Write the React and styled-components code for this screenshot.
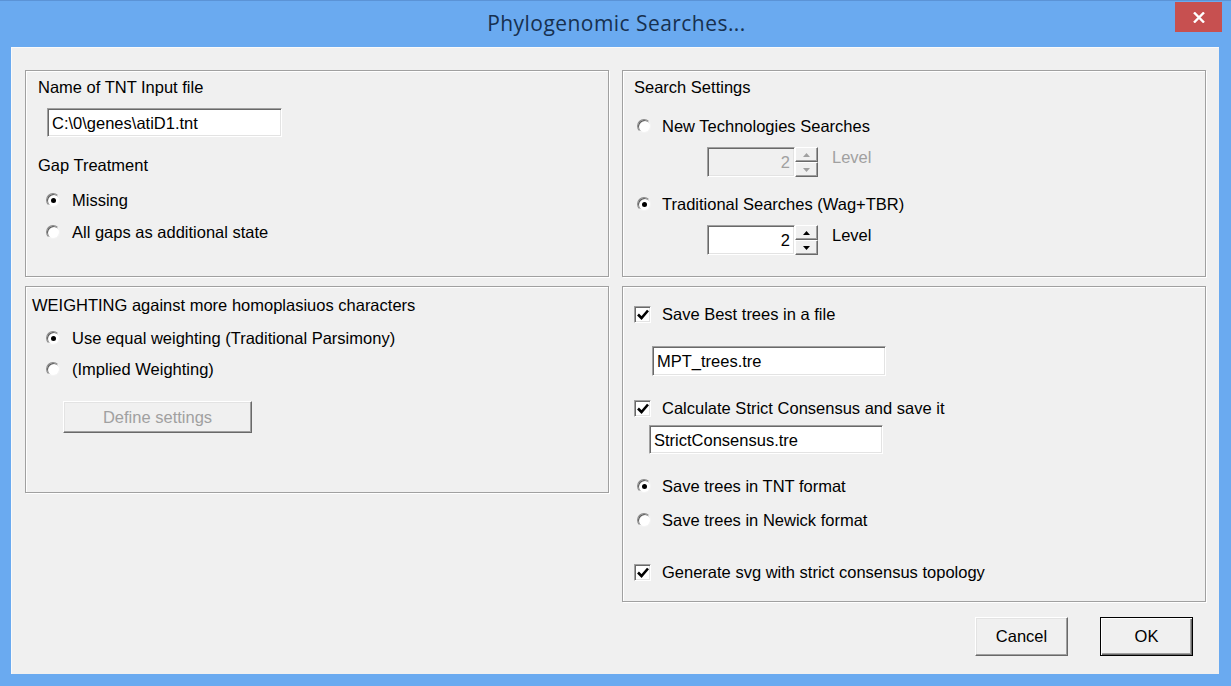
import React from "react";
import styled, { createGlobalStyle } from "styled-components";

const Global = createGlobalStyle`
  html, body { margin: 0; padding: 0; }
  body { width: 1231px; height: 686px; overflow: hidden; font-family: "Liberation Sans", Arial, sans-serif; }
`;

const Window = styled.div`
  width: 1231px;
  height: 686px;
  box-sizing: border-box;
  background: #6aaaf0;
  border-top: 1px solid #5b93d6;
  display: flex;
  flex-direction: column;
  padding: 0 12px 12px 11px;
`;

const TitleBar = styled.div`
  height: 46px;
  display: grid;
  grid-template-columns: 1fr auto 1fr;
  align-items: start;
  margin-right: -3px;
`;

const Title = styled.div`
  grid-column: 2;
  margin-top: 8px;
  font-family: "Open Sans", "Noto Sans", sans-serif;
  font-size: 21px;
  letter-spacing: 0.45px;
  line-height: 28px;
  color: #17304f;
`;

const CloseButton = styled.div`
  grid-column: 3;
  justify-self: end;
  margin-top: 1px;
  width: 47px;
  height: 30px;
  background: #c75050;
  display: flex;
  align-items: center;
  justify-content: center;
`;

const Client = styled.div`
  flex: 1;
  background: #f0f0f0;
  box-shadow: inset 1px 1px 0 #fafafa;
  padding: 23px 14px 0 14px;
  display: flex;
  flex-direction: column;
`;

const Columns = styled.div`
  display: grid;
  grid-template-columns: 584px 584px;
  column-gap: 13px;
  align-items: start;
`;

const Column = styled.div`
  display: flex;
  flex-direction: column;
  gap: 9px;
`;

const GroupBox = styled.div`
  height: ${(p) => p.$h}px;
  box-sizing: border-box;
  border: 1px solid #a0a0a0;
  box-shadow: inset 1px 1px 0 #ffffff, 1px 1px 0 #ffffff;
  display: flex;
  flex-direction: column;
  align-items: flex-start;
`;

const Label = styled.div`
  margin-top: ${(p) => p.$mt}px;
  margin-left: ${(p) => p.$ml}px;
  font-size: 16.5px;
  line-height: 18px;
  color: ${(p) => (p.$disabled ? "#a0a0a0" : "#000")};
  white-space: nowrap;
`;

const TextInput = styled.div`
  margin-top: ${(p) => p.$mt}px;
  margin-left: ${(p) => p.$ml}px;
  width: ${(p) => p.$w}px;
  height: ${(p) => p.$h}px;
  box-sizing: border-box;
  background: #fff;
  border-style: solid;
  border-width: 1px;
  border-color: #a0a0a0 #ffffff #ffffff #a0a0a0;
  box-shadow: inset 1px 1px 0 #696969, inset -1px -1px 0 #e3e3e3;
  font-size: 16.5px;
  line-height: 18px;
  display: flex;
  align-items: center;
  padding-left: 4px;
  white-space: nowrap;
`;

const OptionRow = styled.div`
  margin-top: ${(p) => p.$mt}px;
  margin-left: ${(p) => p.$ml}px;
  height: 20px;
  display: flex;
  align-items: center;
  font-size: 16.5px;
  color: #000;
  white-space: nowrap;
`;

const RadioCircle = styled.span`
  width: 14px;
  height: 14px;
  box-sizing: border-box;
  border-radius: 50%;
  background: radial-gradient(circle at 60% 60%, #ffffff 50%, #dcdcdc 100%);
  border: 1px solid;
  border-color: #8c8c8c #f4f4f4 #f4f4f4 #8c8c8c;
  box-shadow: inset 1px 1px 0 #5a5a5a;
  margin-right: ${(p) => p.$gap}px;
  display: flex;
  align-items: center;
  justify-content: center;
  flex-shrink: 0;
  &::after {
    content: "";
    width: 5px;
    height: 5px;
    border-radius: 50%;
    background: ${(p) => (p.$on ? "#000" : "transparent")};
  }
`;

const CheckBox = styled.span`
  width: 17px;
  height: 17px;
  box-sizing: border-box;
  background: #fff;
  border: 1px solid;
  border-color: #a0a0a0 #ffffff #ffffff #a0a0a0;
  box-shadow: inset 1px 1px 0 #696969, inset -1px -1px 0 #e3e3e3;
  margin-right: 11px;
  display: flex;
  align-items: center;
  justify-content: center;
  flex-shrink: 0;
`;

const SpinRow = styled.div`
  margin-top: ${(p) => p.$mt}px;
  margin-left: 84px;
  display: flex;
  align-items: flex-start;
`;

const SpinField = styled.div`
  width: 88px;
  height: 30px;
  box-sizing: border-box;
  background: ${(p) => (p.$disabled ? "#f0f0f0" : "#fff")};
  border-style: solid;
  border-width: 1px;
  border-color: #a0a0a0 #ffffff #ffffff #a0a0a0;
  box-shadow: inset 1px 1px 0 #696969, inset -1px -1px 0 #e3e3e3;
  font-size: 16.5px;
  color: ${(p) => (p.$disabled ? "#a0a0a0" : "#000")};
  display: flex;
  align-items: center;
  justify-content: flex-end;
  padding-right: 4px;
`;

const SpinButtons = styled.div`
  width: 23px;
  height: 30px;
  display: flex;
  flex-direction: column;
  margin-right: 14px;
`;

const SpinHalf = styled.div`
  flex: 1;
  background: #f0f0f0;
  border: 1px solid;
  border-color: #ffffff #696969 #696969 #ffffff;
  box-shadow: inset -1px -1px 0 #a0a0a0;
  display: flex;
  align-items: center;
  justify-content: center;
`;

const Button = styled.div`
  margin-top: ${(p) => p.$mt || 0}px;
  margin-left: ${(p) => p.$ml || 0}px;
  width: ${(p) => p.$w}px;
  height: ${(p) => p.$h}px;
  box-sizing: border-box;
  background: #f0f0f0;
  border: 1px solid;
  border-color: ${(p) => (p.$default ? "#000" : "#ffffff #696969 #696969 #ffffff")};
  box-shadow: ${(p) =>
    p.$default
      ? "inset 1px 1px 0 #fff, inset -1px -1px 0 #696969, inset -2px -2px 0 #a0a0a0"
      : "inset -1px -1px 0 #a0a0a0, inset 1px 1px 0 #e3e3e3"};
  font-size: 16.5px;
  color: ${(p) => (p.$disabled ? "#a0a0a0" : "#000")};
  display: flex;
  align-items: center;
  justify-content: center;
`;

const Footer = styled.div`
  margin-top: 15px;
  padding-right: 12px;
  display: flex;
  justify-content: flex-end;
  gap: 32px;
`;

const Arrow = ({ up, color }) => (
  <svg width="7" height="4" viewBox="0 0 7 4">
    {up ? <polygon points="3.5,0 7,4 0,4" fill={color} /> : <polygon points="0,0 7,0 3.5,4" fill={color} />}
  </svg>
);

const Spin = ({ mt, disabled }) => {
  const c = disabled ? "#a0a0a0" : "#000";
  return (
    <SpinRow $mt={mt}>
      <SpinField $disabled={disabled}>2</SpinField>
      <SpinButtons>
        <SpinHalf><Arrow up color={c} /></SpinHalf>
        <SpinHalf><Arrow color={c} /></SpinHalf>
      </SpinButtons>
      <Label $mt={1} $ml={0} $disabled={disabled}>Level</Label>
    </SpinRow>
  );
};

const Radio = ({ mt, ml, on, gap = 12, children }) => (
  <OptionRow $mt={mt} $ml={ml}>
    <RadioCircle $on={on} $gap={gap} />
    {children}
  </OptionRow>
);

const Check = ({ mt, ml, children }) => (
  <OptionRow $mt={mt} $ml={ml}>
    <CheckBox>
      <svg width="12" height="11" viewBox="0 0 12 11">
        <polyline points="1,5.5 4.5,9 11,1.5" fill="none" stroke="#000" strokeWidth="2.6" />
      </svg>
    </CheckBox>
    {children}
  </OptionRow>
);

export default function App() {
  return (
    <>
      <Global />
      <Window>
        <TitleBar>
          <Title>Phylogenomic Searches...</Title>
          <CloseButton>
            <svg width="12" height="11" viewBox="0 0 12 11">
              <path d="M1 0.5 L11 10.5 M11 0.5 L1 10.5" stroke="#fff" strokeWidth="2.4" />
            </svg>
          </CloseButton>
        </TitleBar>
        <Client>
          <Columns>
            <Column>
              <GroupBox $h={207}>
                <Label $mt={7} $ml={12}>Name of TNT Input file</Label>
                <TextInput $mt={12} $ml={21} $w={235} $h={29}>C:\0\genes\atiD1.tnt</TextInput>
                <Label $mt={19} $ml={12}>Gap Treatment</Label>
                <Radio mt={16} ml={20} on>Missing</Radio>
                <Radio mt={12} ml={20}>All gaps as additional state</Radio>
              </GroupBox>
              <GroupBox $h={207}>
                <Label $mt={9} $ml={6}>WEIGHTING against more homoplasiuos characters</Label>
                <Radio mt={14} ml={20} on>Use equal weighting (Traditional Parsimony)</Radio>
                <Radio mt={11} ml={20}>(Implied Weighting)</Radio>
                <Button $mt={22} $ml={37} $w={189} $h={32} $disabled>Define settings</Button>
              </GroupBox>
            </Column>
            <Column>
              <GroupBox $h={207}>
                <Label $mt={7} $ml={11}>Search Settings</Label>
                <Radio mt={20} ml={14} gap={11}>New Technologies Searches</Radio>
                <Spin mt={11} disabled />
                <Radio mt={17} ml={14} gap={11} on>Traditional Searches (Wag+TBR)</Radio>
                <Spin mt={11} />
              </GroupBox>
              <GroupBox $h={316}>
                <Check mt={17} ml={11}>Save Best trees in a file</Check>
                <TextInput $mt={22} $ml={29} $w={234} $h={30}>MPT_trees.tre</TextInput>
                <Check mt={22} ml={11}>Calculate Strict Consensus and save it</Check>
                <TextInput $mt={7} $ml={26} $w={234} $h={29}>StrictConsensus.tre</TextInput>
                <Radio mt={22} ml={14} gap={11} on>Save trees in TNT format</Radio>
                <Radio mt={14} ml={14} gap={11}>Save trees in Newick format</Radio>
                <Check mt={32} ml={11}>Generate svg with strict consensus topology</Check>
              </GroupBox>
            </Column>
          </Columns>
          <Footer>
            <Button $w={93} $h={39}>Cancel</Button>
            <Button $w={93} $h={39} $default>OK</Button>
          </Footer>
        </Client>
      </Window>
    </>
  );
}
